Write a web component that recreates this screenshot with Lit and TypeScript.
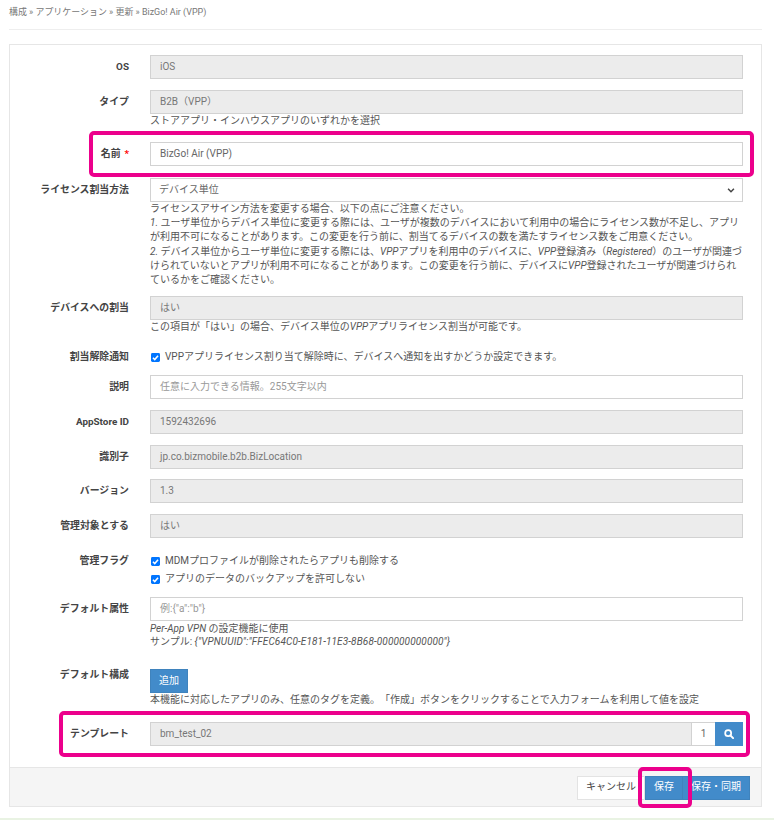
import { LitElement, html, css } from "lit";
import { customElement } from "lit/decorators.js";

const check = html`<svg class="cb" viewBox="0 0 13 13" width="9" height="9"><rect width="13" height="13" rx="2" fill="#0075ff"/><path d="M2.8 6.8 5.4 9.4 10.2 3.8" fill="none" stroke="#fff" stroke-width="2.2"/></svg>`;

@customElement("app-root")
export class AppRoot extends LitElement {
  static styles = css`
    :host { display: block; width: 774px; height: 820px; overflow: hidden; position: relative; background: #fff;
      font-family: Roboto, "Noto Sans CJK JP", sans-serif; font-size: 10px; color: #555; line-height: 14.2px; text-spacing-trim: space-all; }
    * { box-sizing: border-box; }
    .crumb { height: 30px; margin: 0 12px 0 9px; padding-top: 6px; border-bottom: 1px solid #eee; font-size: 8.95px; color: #777; line-height: 13px; }
    .panel { margin: 14px 12px 0 9px; height: 763px; border: 1px solid #e6e6e6; display: flex; flex-direction: column; }
    .body { flex: 1; padding: 10px 0 0 0; display: flex; flex-direction: column; }
    .row { display: grid; grid-template-columns: 119px 593px; column-gap: 21px; }
    .h27 { height: 27px; } .h34 { height: 34px; } .h35 { height: 35px; } .h36 { height: 36px; } .h38 { height: 38px; }
    .h45 { height: 45px; } .h52 { height: 52px; } .h59 { height: 59px; } .h66 { height: 66px; } .h118 { height: 118px; }
    label { font-weight: 700; font-size: 9.9px; text-align: right; color: #444; line-height: 14px; padding-top: 5px; }
    label.top2 { padding-top: 2px; }
    .req { color: #f00; margin-left: 4px; }
    .ctl { height: 24px; border: 1px solid #d2d2d2; padding: 0 9px; line-height: 22px; color: #666; background: #fff; }
    .ro { background: #ececec; color: #777; }
    .ph { color: #999; }
    .sel { padding-left: 8px; display: flex; justify-content: space-between; align-items: center; color: #666; }
    .sel svg { margin-right: -2px; }
    .help { color: #555; white-space: nowrap; }
    .help i { font-style: italic; }
    .attr { padding-top: 1px; line-height: 13.4px; }
    .sample { letter-spacing: 0.12px; }
    .chk { display: flex; align-items: center; gap: 5.5px; height: 18px; white-space: nowrap; color: #555; }
    .cb { flex: none; margin-left: 0.5px; }
    .add { display: block; width: 38px; height: 24px; background: #428bca; color: #fff; border: 1px solid #3f83bd; font: inherit; padding: 0; margin-top: 6px; }
    .group { display: flex; }
    .group .ctl { flex: 1; }
    .num { width: 23px; height: 24px; border: 1px solid #d2d2d2; border-left: 0; border-right: 0; text-align: center; line-height: 22px; color: #666; }
    .srch { width: 28px; height: 24px; background: #428bca; display: flex; align-items: center; justify-content: center; }
    .foot { height: 39px; background: #f5f5f5; border-top: 1px solid #e6e6e6; display: flex; justify-content: flex-end; align-items: center; padding: 1px 11px 0 0; }
    .btn { height: 24px; font: inherit; border: 1px solid #e3e3e3; background: #fff; color: #444; padding: 0; }
    .cancel { width: 68px; }
    .save { width: 38px; background: #428bca; border-color: #3f83bd; color: #fff; }
    .sync { width: 67px; background: #428bca; border-color: #3f83bd; color: #fff; border-left: 0; }
    .strip { position: absolute; left: 0; right: 0; top: 818px; height: 2px; background: #e9f3e3; }
    .mark { position: absolute; border: 4px solid #ec008c; border-radius: 5px; pointer-events: none; }
    .m1 { left: 89px; top: 131px; width: 665px; height: 46px; }
    .m2 { left: 59px; top: 711px; width: 691px; height: 46px; }
    .m3 { left: 638px; top: 767px; width: 54px; height: 41px; }
  `;

  render() {
    return html`
      <div class="crumb">構成 » アプリケーション » 更新 » BizGo! Air (VPP)</div>
      <div class="panel">
        <div class="body">
          <div class="row h35"><label>OS</label><div><div class="ctl ro">iOS</div></div></div>
          <div class="row h52"><label>タイプ</label><div><div class="ctl ro">B2B（VPP）</div><div class="help">ストアアプリ・インハウスアプリのいずれかを選択</div></div></div>
          <div class="row h36"><label>名前<span class="req">*</span></label><div><div class="ctl">BizGo! Air (VPP)</div></div></div>
          <div class="row h118"><label>ライセンス割当方法</label><div>
            <div class="ctl sel"><span>デバイス単位</span><svg width="8" height="5" viewBox="0 0 9 6"><path d="M1 1 4.5 4.5 8 1" fill="none" stroke="#444" stroke-width="1.8"/></svg></div>
            <div class="help">ライセンスアサイン方法を変更する場合、以下の点にご注意ください。<br>
            <i>1.</i> ユーザ単位からデバイス単位に変更する際には、ユーザが複数のデバイスにおいて利用中の場合にライセンス数が不足し、アプリ<br>
            が利用不可になることがあります。この変更を行う前に、割当てるデバイスの数を満たすライセンス数をご用意ください。<br>
            <i>2.</i> デバイス単位からユーザ単位に変更する際には、<i>VPP</i>アプリを利用中のデバイスに、<i>VPP</i>登録済み（<i>Registered</i>）のユーザが関連づ<br>
            けられていないとアプリが利用不可になることがあります。この変更を行う前に、デバイスに<i>VPP</i>登録されたユーザが関連づけられ<br>
            ているかをご確認ください。</div></div></div>
          <div class="row h52"><label>デバイスへの割当</label><div><div class="ctl ro">はい</div><div class="help">この項目が「はい」の場合、デバイス単位の<i>VPP</i>アプリライセンス割当が可能です。</div></div></div>
          <div class="row h27"><label class="top2">割当解除通知</label><div><div class="chk">${check}VPPアプリライセンス割り当て解除時に、デバイスへ通知を出すかどうか設定できます。</div></div></div>
          <div class="row h35"><label>説明</label><div><div class="ctl ph">任意に入力できる情報。255文字以内</div></div></div>
          <div class="row h35"><label>AppStore ID</label><div><div class="ctl ro">1592432696</div></div></div>
          <div class="row h34"><label>識別子</label><div><div class="ctl ro">jp.co.bizmobile.b2b.BizLocation</div></div></div>
          <div class="row h35"><label>バージョン</label><div><div class="ctl ro">1.3</div></div></div>
          <div class="row h38"><label>管理対象とする</label><div><div class="ctl ro">はい</div></div></div>
          <div class="row h45"><label class="top2">管理フラグ</label><div><div class="chk">${check}MDMプロファイルが削除されたらアプリも削除する</div><div class="chk">${check}アプリのデータのバックアップを許可しない</div></div></div>
          <div class="row h66"><label>デフォルト属性</label><div><div class="ctl ph">例:{"a":"b"}</div><div class="help attr"><i>Per-App VPN</i> の設定機能に使用<br>サンプル: <i class="sample">{"VPNUUID":"FFEC64C0-E181-11E3-8B68-000000000000"}</i></div></div></div>
          <div class="row h59"><label>デフォルト構成</label><div><button class="add">追加</button><div class="help">本機能に対応したアプリのみ、任意のタグを定義。「作成」ボタンをクリックすることで入力フォームを利用して値を設定</div></div></div>
          <div class="row"><label>テンプレート</label><div class="group"><div class="ctl ro">bm_test_02</div><div class="num">1</div><div class="srch"><svg width="10" height="10" viewBox="0 0 11 11"><circle cx="4.6" cy="4.6" r="3.3" fill="none" stroke="#fff" stroke-width="1.9"/><path d="M7 7 10 10" stroke="#fff" stroke-width="2.2" stroke-linecap="round"/></svg></div></div></div>
        </div>
        <div class="foot"><button class="btn cancel">キャンセル</button><button class="btn save">保存</button><button class="btn sync">保存・同期</button></div>
      </div>
      <div class="strip"></div>
      <div class="mark m1"></div><div class="mark m2"></div><div class="mark m3"></div>
    `;
  }
}
